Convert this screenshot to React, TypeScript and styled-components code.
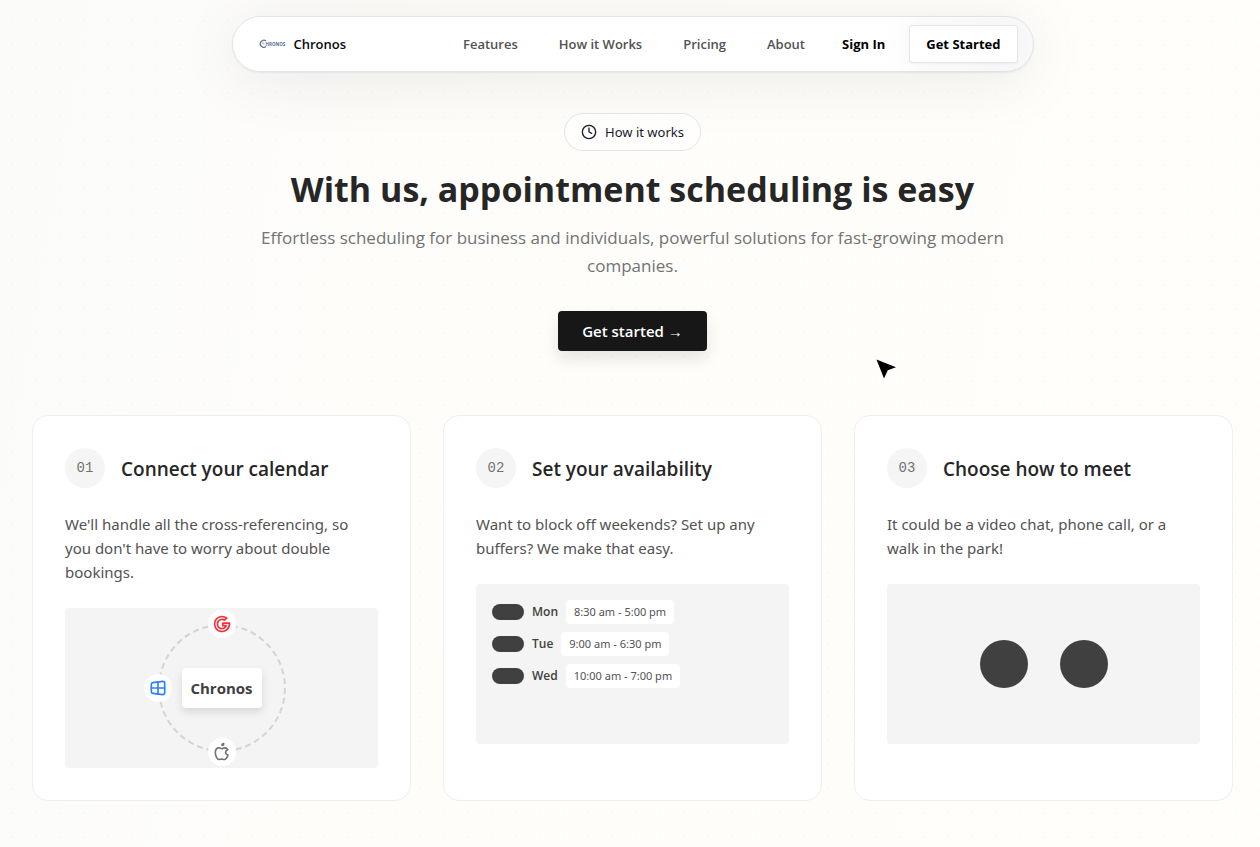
import React from "react";
import styled, { createGlobalStyle } from "styled-components";
import { TbBrandGoogle, TbBrandWindows, TbBrandApple } from "react-icons/tb";
import { Clock } from "lucide-react";

const GlobalStyle = createGlobalStyle`
  *, *::before, *::after { box-sizing: border-box; }
  body {
    margin: 0;
    font-family: "Open Sans", "Noto Sans", sans-serif;
    color: #262626;
    background: #fefdfa;
  }
  h1, h2, p, ul, ol { margin: 0; padding: 0; }
  ul, ol { list-style: none; }
  a { color: inherit; text-decoration: none; }
`;

const Page = styled.div`
  position: relative;
  min-height: 100vh;
  padding: 16px 27px 46px 32px;
  background:
    radial-gradient(circle at 12px 21px, rgba(0, 0, 0, 0.018) 1px, transparent 1px) 0 0 / 24px 24px,
    linear-gradient(100deg, #fbfbfa 0%, #fefdfa 40%, #fffefa 100%);
`;

const Header = styled.header`
  display: flex;
  align-items: center;
  max-width: 802px;
  height: 56px;
  margin: 0 auto;
  padding: 0 15px 0 25px;
  border: 1px solid #e2e3e2;
  border-radius: 28px;
  background: linear-gradient(90deg, #ffffff 80%, #f9f9fb 100%);
  box-shadow: 0 8px 64px rgba(0, 0, 0, 0.08), 0 1px 2px rgba(0, 0, 0, 0.06);
  font-size: 13px;
  line-height: 20px;
`;

const Brand = styled.a`
  display: flex;
  align-items: center;
  gap: 8px;
  color: #0a0a0a;
  font-weight: 600;
`;

const Nav = styled.nav`
  display: flex;
  gap: 41px;
  margin-left: auto;
  color: #525252;
  font-weight: 600;
`;

const SignIn = styled.a`
  margin: 0 24px 0 37px;
  color: #000;
  font-weight: 700;
`;

const HeaderButton = styled.button`
  height: 38px;
  padding: 0 16px;
  border: 1px solid #e5e6e7;
  border-radius: 3px;
  background: #fff;
  color: #000;
  font: inherit;
  font-weight: 700;
  box-shadow: 0 0 24px rgba(34, 42, 53, 0.04), 0 1px 2px rgba(0, 0, 0, 0.04);
  cursor: pointer;
`;

const Hero = styled.section`
  display: flex;
  flex-direction: column;
  align-items: center;
  margin-top: 41px;
  text-align: center;
`;

const Pill = styled.div`
  display: flex;
  align-items: center;
  gap: 8px;
  height: 38px;
  padding: 0 16px;
  border: 1px solid #e5e5e8;
  border-radius: 19px;
  background: rgba(255, 255, 255, 0.6);
  color: #171a2b;
  font-family: "Noto Sans", sans-serif;
  font-size: 13px;
  line-height: 20px;
`;

const Title = styled.h1`
  margin-top: 18px;
  font-size: 34px;
  font-weight: 700;
  line-height: 40px;
`;

const Lead = styled.p`
  max-width: 768px;
  margin-top: 15px;
  color: #737373;
  font-size: 17px;
  line-height: 28px;
`;

const PrimaryButton = styled.button`
  height: 40px;
  margin-top: 31px;
  padding: 0 24px;
  border: 0;
  border-radius: 4px;
  background: #171717;
  color: #fff;
  font: inherit;
  font-size: 15px;
  font-weight: 600;
  line-height: 24px;
  box-shadow: 0 8px 16px rgba(0, 0, 0, 0.1);
  cursor: pointer;
`;

const Steps = styled.ol`
  display: grid;
  grid-template-columns: repeat(3, minmax(0, 1fr));
  gap: 32px;
  margin-top: 64px;
`;

const Card = styled.li`
  padding: 32px;
  border: 1px solid #efefef;
  border-radius: 16px;
  background: #fff;
`;

const CardHead = styled.div`
  display: flex;
  align-items: center;
  gap: 16px;
`;

const StepNumber = styled.span`
  display: flex;
  align-items: center;
  justify-content: center;
  width: 40px;
  height: 40px;
  border-radius: 50%;
  background: #f5f5f5;
  color: #737373;
  font-family: "Liberation Mono", monospace;
  font-size: 14px;
`;

const CardTitle = styled.h2`
  padding-top: 2px;
  font-size: 19px;
  font-weight: 600;
  line-height: 28px;
`;

const CardText = styled.p`
  margin: 24px 0;
  color: #525252;
  font-family: "Noto Sans", sans-serif;
  font-size: 15px;
  line-height: 24px;
`;

const Panel = styled.div<{ $centered?: boolean }>`
  display: flex;
  flex-direction: ${(p) => (p.$centered ? "row" : "column")};
  align-items: ${(p) => (p.$centered ? "center" : "stretch")};
  justify-content: ${(p) => (p.$centered ? "center" : "flex-start")};
  gap: ${(p) => (p.$centered ? "32px" : "8px")};
  height: 160px;
  padding: 16px;
  border-radius: 4px;
  background: #f4f4f4;
`;

const Orbit = styled.div`
  position: relative;
  display: flex;
  align-items: center;
  justify-content: center;
  width: 128px;
  height: 128px;
  border: 2px dashed #d4d4d4;
  border-radius: 50%;
`;

const OrbitCore = styled.strong`
  flex: none;
  width: 80px;
  border-radius: 4px;
  background: #fff;
  color: #404040;
  font-size: 15px;
  font-weight: 700;
  line-height: 40px;
  text-align: center;
  box-shadow: 0 4px 8px rgba(0, 0, 0, 0.12);
`;

const places = {
  top: "left: 50%; top: -2px;",
  left: "left: -2px; top: 50%;",
  bottom: "left: 50%; top: calc(100% + 2px);",
};

const OrbitBadge = styled.span<{ $place: keyof typeof places; $color: string }>`
  position: absolute;
  ${(p) => places[p.$place]}
  display: flex;
  padding: 4px;
  border-radius: 50%;
  background: #fff;
  color: ${(p) => p.$color};
  transform: translate(-50%, -50%);
`;

const DayRow = styled.div`
  display: flex;
  align-items: center;
  gap: 8px;
  color: #404040;
  font-size: 12px;
  line-height: 16px;
`;

const Toggle = styled.span`
  width: 32px;
  height: 16px;
  border-radius: 8px;
  background: #404040;
`;

const Day = styled.span`
  font-weight: 600;
`;

const Hours = styled.span`
  padding: 4px 8px;
  border-radius: 4px;
  background: #fff;
  color: #525252;
  font-family: "Noto Sans", sans-serif;
  font-size: 11px;
`;

const Dot = styled.span`
  width: 48px;
  height: 48px;
  border-radius: 50%;
  background: #404040;
`;

const Pointer = styled.svg`
  position: absolute;
  left: 875px;
  top: 358px;
`;

const Logo = () => (
  <svg width="28" height="12" viewBox="0 0 56 24" aria-hidden="true">
    <path d="M16 6A7 7 0 1 0 16 17" fill="none" stroke="#5b7397" strokeWidth="2.6" />
    <path d="M10 7V12H13" fill="none" stroke="#8da0bb" strokeWidth="1.4" />
    <text x="15" y="15" fontSize="9" fontWeight="700" fill="#546c91">HRONOS</text>
  </svg>
);

const days = [
  { day: "Mon", hours: "8:30 am - 5:00 pm" },
  { day: "Tue", hours: "9:00 am - 6:30 pm" },
  { day: "Wed", hours: "10:00 am - 7:00 pm" },
];

const CalendarPanel = () => (
  <Panel $centered>
    <Orbit>
      <OrbitCore>Chronos</OrbitCore>
      <OrbitBadge $place="top" $color="#fb2c36"><TbBrandGoogle size={20} /></OrbitBadge>
      <OrbitBadge $place="left" $color="#2b7fff"><TbBrandWindows size={20} /></OrbitBadge>
      <OrbitBadge $place="bottom" $color="#737373"><TbBrandApple size={20} /></OrbitBadge>
    </Orbit>
  </Panel>
);

const HoursPanel = () => (
  <Panel>
    {days.map(({ day, hours }) => (
      <DayRow key={day}>
        <Toggle />
        <Day>{day}</Day>
        <Hours>{hours}</Hours>
      </DayRow>
    ))}
  </Panel>
);

const MeetPanel = () => (
  <Panel $centered>
    <Dot />
    <Dot />
  </Panel>
);

const steps = [
  {
    number: "01",
    title: "Connect your calendar",
    text: "We'll handle all the cross-referencing, so you don't have to worry about double bookings.",
    panel: <CalendarPanel />,
  },
  {
    number: "02",
    title: "Set your availability",
    text: "Want to block off weekends? Set up any buffers? We make that easy.",
    panel: <HoursPanel />,
  },
  {
    number: "03",
    title: "Choose how to meet",
    text: "It could be a video chat, phone call, or a walk in the park!",
    panel: <MeetPanel />,
  },
];

export default function App() {
  return (
    <Page>
      <GlobalStyle />
      <Header>
        <Brand href="#home"><Logo />Chronos</Brand>
        <Nav>
          <a href="#features">Features</a>
          <a href="#how-it-works">How it Works</a>
          <a href="#pricing">Pricing</a>
          <a href="#about">About</a>
        </Nav>
        <SignIn href="#sign-in">Sign In</SignIn>
        <HeaderButton type="button">Get Started</HeaderButton>
      </Header>
      <main>
        <Hero>
          <Pill><Clock size={16} />How it works</Pill>
          <Title>With us, appointment scheduling is easy</Title>
          <Lead>
            Effortless scheduling for business and individuals, powerful solutions for fast-growing modern
            companies.
          </Lead>
          <PrimaryButton type="button">Get started →</PrimaryButton>
        </Hero>
        <Steps>
          {steps.map((step) => (
            <Card key={step.number}>
              <CardHead>
                <StepNumber>{step.number}</StepNumber>
                <CardTitle>{step.title}</CardTitle>
              </CardHead>
              <CardText>{step.text}</CardText>
              {step.panel}
            </Card>
          ))}
        </Steps>
      </main>
      <Pointer width="22" height="22" viewBox="0 0 22 22" aria-hidden="true">
        <path d="M1.5 1.5L21 9.3L12.8 12.2L9 20.5Z" fill="#000" />
      </Pointer>
    </Page>
  );
}
